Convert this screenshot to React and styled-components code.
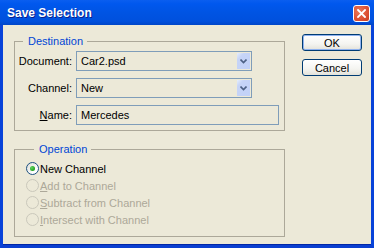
import React from "react";
import styled, { createGlobalStyle } from "styled-components";

const GlobalStyle = createGlobalStyle`
  html, body {
    margin: 0;
    padding: 0;
    background: #ece9d8;
  }
  body {
    font-family: "Liberation Sans", Arial, sans-serif;
    font-size: 11px;
  }
`;

const Window = styled.div`
  width: 374px;
  height: 248px;
  display: flex;
  flex-direction: column;
  overflow: hidden;
`;

const TitleBar = styled.div`
  height: 25px;
  flex: none;
  display: flex;
  align-items: center;
  justify-content: space-between;
  padding: 0 4px 0 7px;
  background: linear-gradient(180deg, #0a5ef0 0%, #0058ee 15%, #0054e3 50%, #0050dd 85%, #0046c8 100%);
`;

const Title = styled.span`
  color: #fff;
  font-family: "Liberation Sans", Arial, sans-serif;
  font-weight: bold;
  font-size: 12px;
  text-shadow: 1px 1px 0 #0a1e8c;
`;

const CloseButton = styled.div`
  width: 17px;
  height: 17px;
  margin-top: 1px;
  border: 1px solid #fff;
  border-radius: 3px;
  background: radial-gradient(circle at 35% 35%, #e97a5a 0%, #dc5033 60%, #c83d20 100%);
  display: flex;
  align-items: center;
  justify-content: center;
  box-sizing: border-box;
`;

const Body = styled.div`
  flex: 1;
  display: flex;
  align-items: flex-start;
  background: #ece9d8;
  border-left: 3px solid #0843d9;
  border-right: 3px solid #0843d9;
  border-bottom: 3px solid #0a3fd0;
  box-shadow: inset 0 -1px 0 #0026a6;
`;

const Groups = styled.div`
  display: flex;
  flex-direction: column;
  gap: 12px;
  padding: 10px 0 0 11px;
`;

const Group = styled.fieldset`
  width: 271px;
  margin: 0;
  padding: ${(p) => p.$pad};
  border: 1px solid #aca899;
  box-sizing: border-box;
`;

const Legend = styled.legend`
  margin-left: 8px;
  padding: 0 4px 0 5px;
  line-height: 13px;
  color: #0046d5;
`;

const FieldGrid = styled.div`
  display: grid;
  grid-template-columns: 57px auto;
  column-gap: 4px;
  row-gap: 7px;
  align-items: center;
`;

const Label = styled.label`
  text-align: right;
  color: #000;
`;

const Combo = styled.div`
  width: 176px;
  height: 20px;
  box-sizing: border-box;
  border: 1px solid #7f9db9;
  display: flex;
  align-items: center;
  justify-content: space-between;
  padding: 0 1px 0 4px;
`;

const ArrowButton = styled.div`
  width: 13px;
  height: 16px;
  background: linear-gradient(135deg, #e6eefc 0%, #c6d4f7 25%, #c1d1f8 100%);
  display: flex;
  align-items: center;
  justify-content: center;
`;

const TextField = styled.div`
  width: 203px;
  height: 20px;
  box-sizing: border-box;
  border: 1px solid #7f9db9;
  display: flex;
  align-items: center;
  padding: 0 4px;
`;

const RadioList = styled.div`
  display: flex;
  flex-direction: column;
`;

const RadioRow = styled.div`
  height: 17px;
  display: flex;
  align-items: center;
  gap: 1px;
  color: ${(p) => (p.$disabled ? "#aca899" : "#000")};
`;

const RadioCircle = styled.span`
  width: 13px;
  height: 13px;
  box-sizing: border-box;
  border-radius: 50%;
  border: 1px solid ${(p) => (p.$disabled ? "#cac8bb" : "#1c5180")};
  background: ${(p) =>
    p.$disabled ? "transparent" : "linear-gradient(135deg, #dcdcd5 0%, #fff 70%)"};
  display: flex;
  align-items: center;
  justify-content: center;
  flex: none;
`;

const Dot = styled.span`
  width: 5px;
  height: 5px;
  border-radius: 50%;
  background: radial-gradient(circle at 35% 35%, #5fd45f 0%, #21a121 70%);
`;

const Buttons = styled.div`
  display: flex;
  flex-direction: column;
  gap: 8px;
  margin-left: 17px;
  padding-top: 9px;
`;

const Button = styled.div`
  width: 60px;
  height: 17px;
  box-sizing: border-box;
  border: 1px solid #003c74;
  border-radius: 3px;
  background: linear-gradient(180deg, #fff 0%, #f4f4f0 60%, #e3e2da 100%);
  box-shadow: ${(p) => (p.$default ? "inset 0 0 0 1px #8fb2ef" : "none")};
  display: flex;
  align-items: center;
  justify-content: center;
  color: #000;
`;

const Arrow = () => (
  <svg width="7" height="5" viewBox="0 0 7 5">
    <path d="M0.5 0.5 L3.5 3.5 L6.5 0.5" fill="none" stroke="#4d6185" strokeWidth="1.6" />
  </svg>
);

const CloseX = () => (
  <svg width="9" height="9" viewBox="0 0 9 9">
    <path d="M1 1 L8 8 M8 1 L1 8" stroke="#fff" strokeWidth="1.8" strokeLinecap="square" />
  </svg>
);

const radios = [
  { key: "A", rest: "dd to Channel", disabled: true },
  { key: "S", rest: "ubtract from Channel", disabled: true },
  { key: "I", rest: "ntersect with Channel", disabled: true },
];

export default function App() {
  return (
    <>
      <GlobalStyle />
      <Window>
        <TitleBar>
          <Title>Save Selection</Title>
          <CloseButton>
            <CloseX />
          </CloseButton>
        </TitleBar>
        <Body>
          <Groups>
            <Group $pad="3px 0 5px 0">
              <Legend>Destination</Legend>
              <FieldGrid>
                <Label>Document:</Label>
                <Combo>
                  <span>Car2.psd</span>
                  <ArrowButton>
                    <Arrow />
                  </ArrowButton>
                </Combo>
                <Label>Channel:</Label>
                <Combo>
                  <span>New</span>
                  <ArrowButton>
                    <Arrow />
                  </ArrowButton>
                </Combo>
                <Label>
                  <u>N</u>ame:
                </Label>
                <TextField>Mercedes</TextField>
              </FieldGrid>
            </Group>
            <Group $pad="4px 0 8px 11px">
              <Legend>Operation</Legend>
              <RadioList>
                <RadioRow>
                  <RadioCircle>
                    <Dot />
                  </RadioCircle>
                  <span>New Channel</span>
                </RadioRow>
                {radios.map((r) => (
                  <RadioRow key={r.key} $disabled={r.disabled}>
                    <RadioCircle $disabled={r.disabled} />
                    <span>
                      <u>{r.key}</u>
                      {r.rest}
                    </span>
                  </RadioRow>
                ))}
              </RadioList>
            </Group>
          </Groups>
          <Buttons>
            <Button $default>OK</Button>
            <Button>Cancel</Button>
          </Buttons>
        </Body>
      </Window>
    </>
  );
}
